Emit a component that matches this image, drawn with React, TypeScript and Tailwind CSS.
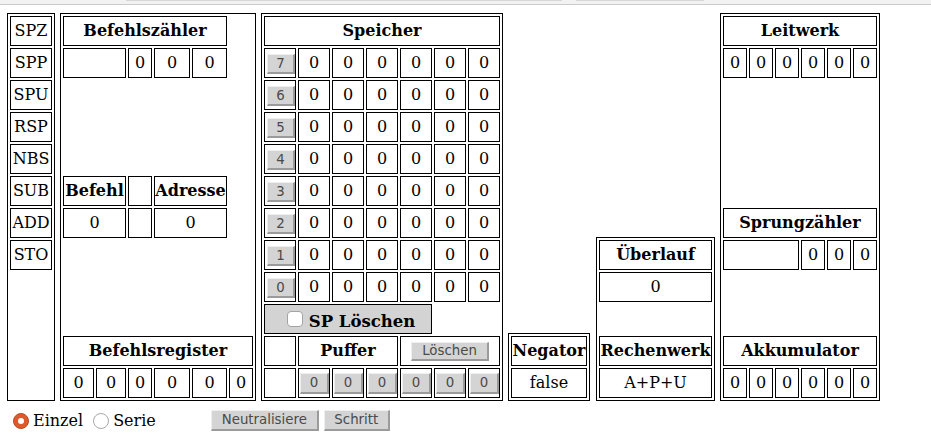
import React from "react";

type P = { children?: React.ReactNode; className?: string };

function C({ children, className = "" }: P) {
  return (
    <div className={`border border-black flex items-center justify-center overflow-hidden whitespace-nowrap ${className}`}>
      {children}
    </div>
  );
}

function H({ children, className = "" }: P) {
  return <C className={`font-bold ${className}`}>{children}</C>;
}

function Btn({ children, className = "" }: P) {
  return (
    <button
      className={`bg-[#d4d4d4] text-[#4a4a4a] font-['DejaVu_Sans',sans-serif] text-[13.33px] leading-none border-t border-l border-t-[#efefef] border-l-[#efefef] border-b-2 border-r-2 border-b-[#9b9b9b] border-r-[#9b9b9b] flex items-center justify-center ${className}`}
    >
      {children}
    </button>
  );
}

const panel = "border border-black p-[2px] grid gap-[2px]";

export default function App() {
  const regs = ["SPZ", "SPP", "SPU", "RSP", "NBS", "SUB", "ADD", "STO"];
  const mem = [7, 6, 5, 4, 3, 2, 1, 0];
  return (
    <div className="w-[931px] h-[446px] bg-white text-black font-['DejaVu_Serif',serif] text-[16px] overflow-hidden">
      {/* top strip */}
      <div className="h-[4px] bg-[#f2f2f2] flex items-start">
        <div className="ml-[126px] w-[436px] h-[1px] bg-[#d6d6d6]" />
        <div className="ml-[14px] w-[128px] h-[1px] bg-[#d6d6d6]" />
      </div>
      <div className="h-[1px] bg-[#cbcbcb]" />

      <div className="mt-[8px] ml-[7px] flex items-end">
        {/* Left register panel */}
        <div className={`${panel} grid-cols-[42px] grid-rows-[repeat(12,30px)]`}>
          {regs.map((r, i) => (
            <C key={r} className={`col-start-1 ${["row-start-1","row-start-2","row-start-3","row-start-4","row-start-5","row-start-6","row-start-7","row-start-8"][i]}`}>
              {r}
            </C>
          ))}
        </div>

        {/* Befehlszähler panel */}
        <div className={`${panel} ml-[5px] grid-cols-[31px_30px_24px_36px_35px_24px] grid-rows-[repeat(12,30px)]`}>
          <H className="row-start-1 col-start-1 col-span-5">Befehlszähler</H>
          <C className="row-start-2 col-start-1 col-span-2" />
          <C className="row-start-2 col-start-3">0</C>
          <C className="row-start-2 col-start-4">0</C>
          <C className="row-start-2 col-start-5">0</C>

          <H className="row-start-6 col-start-1 col-span-2">Befehl</H>
          <C className="row-start-6 col-start-3" />
          <H className="row-start-6 col-start-4 col-span-2">Adresse</H>
          <C className="row-start-7 col-start-1 col-span-2">0</C>
          <C className="row-start-7 col-start-3" />
          <C className="row-start-7 col-start-4 col-span-2">0</C>

          <H className="row-start-11 col-start-1 col-span-6">Befehlsregister</H>
          <C className="row-start-12 col-start-1">0</C>
          <C className="row-start-12 col-start-2">0</C>
          <C className="row-start-12 col-start-3">0</C>
          <C className="row-start-12 col-start-4">0</C>
          <C className="row-start-12 col-start-5">0</C>
          <C className="row-start-12 col-start-6">0</C>
        </div>

        {/* Speicher panel */}
        <div className={`${panel} ml-[5px] grid-cols-[repeat(7,32px)] grid-rows-[repeat(12,30px)]`}>
          <H className="col-span-7">Speicher</H>
          {mem.map((m) => (
            <React.Fragment key={m}>
              <C className="justify-start pl-[2px] pt-[2px]">
                <Btn className="w-[28px] h-[20px]">{m}</Btn>
              </C>
              {[0, 1, 2, 3, 4, 5].map((k) => (
                <C key={k}>0</C>
              ))}
            </React.Fragment>
          ))}
          <C className="col-span-5 bg-[#d3d3d3] font-bold gap-[6px] pl-[6px]">
            <span className="w-[16px] h-[16px] rounded-[4px] border border-[#a3a3a3] bg-white inline-block" />
            <span className="pt-[7px] text-[16.5px]">SP Löschen</span>
          </C>
          <div className="col-span-2" />
          <C />
          <H className="col-span-3">Puffer</H>
          <C className="col-span-3">
            <Btn className="w-[78px] h-[19px]">Löschen</Btn>
          </C>
          <C />
          {[0, 1, 2, 3, 4, 5].map((k) => (
            <C key={k} className="justify-start pl-[1px]">
              <Btn className="w-[29px] h-[21px]">0</Btn>
            </C>
          ))}
        </div>

        {/* Negator */}
        <div className={`${panel} ml-[5px] grid-cols-[76px] grid-rows-[repeat(2,30px)]`}>
          <H>Negator</H>
          <C>false</C>
        </div>

        {/* Rechenwerk */}
        <div className={`${panel} ml-[6px] grid-cols-[113px] grid-rows-[repeat(5,30px)]`}>
          <H>Überlauf</H>
          <C>0</C>
          <div />
          <H>Rechenwerk</H>
          <C>A+P+U</C>
        </div>

        {/* Leitwerk */}
        <div className={`${panel} ml-[5px] grid-cols-[repeat(6,24px)] grid-rows-[repeat(12,30px)]`}>
          <H className="row-start-1 col-start-1 col-span-6">Leitwerk</H>
          <C className="row-start-2 col-start-1">0</C>
          <C className="row-start-2 col-start-2">0</C>
          <C className="row-start-2 col-start-3">0</C>
          <C className="row-start-2 col-start-4">0</C>
          <C className="row-start-2 col-start-5">0</C>
          <C className="row-start-2 col-start-6">0</C>

          <H className="row-start-7 col-start-1 col-span-6">Sprungzähler</H>
          <C className="row-start-8 col-start-1 col-span-3" />
          <C className="row-start-8 col-start-4">0</C>
          <C className="row-start-8 col-start-5">0</C>
          <C className="row-start-8 col-start-6">0</C>

          <H className="row-start-11 col-start-1 col-span-6">Akkumulator</H>
          <C className="row-start-12 col-start-1">0</C>
          <C className="row-start-12 col-start-2">0</C>
          <C className="row-start-12 col-start-3">0</C>
          <C className="row-start-12 col-start-4">0</C>
          <C className="row-start-12 col-start-5">0</C>
          <C className="row-start-12 col-start-6">0</C>
        </div>
      </div>

      {/* bottom controls */}
      <div className="mt-[9px] h-[21px] flex items-center">
        <span className="ml-[13px] w-[16px] h-[16px] rounded-full bg-[#dd5a2a] border border-[#b84a22] flex items-center justify-center">
          <span className="w-[6px] h-[6px] rounded-full bg-white" />
        </span>
        <span className="ml-[4px]">Einzel</span>
        <span className="ml-[10px] w-[16px] h-[16px] rounded-full bg-white border border-[#a8a8a8]" />
        <span className="ml-[4px]">Serie</span>
        <Btn className="ml-[55px] w-[108px] h-[21px]">Neutralisiere</Btn>
        <Btn className="ml-[5px] w-[66px] h-[21px]">Schritt</Btn>
      </div>
    </div>
  );
}
